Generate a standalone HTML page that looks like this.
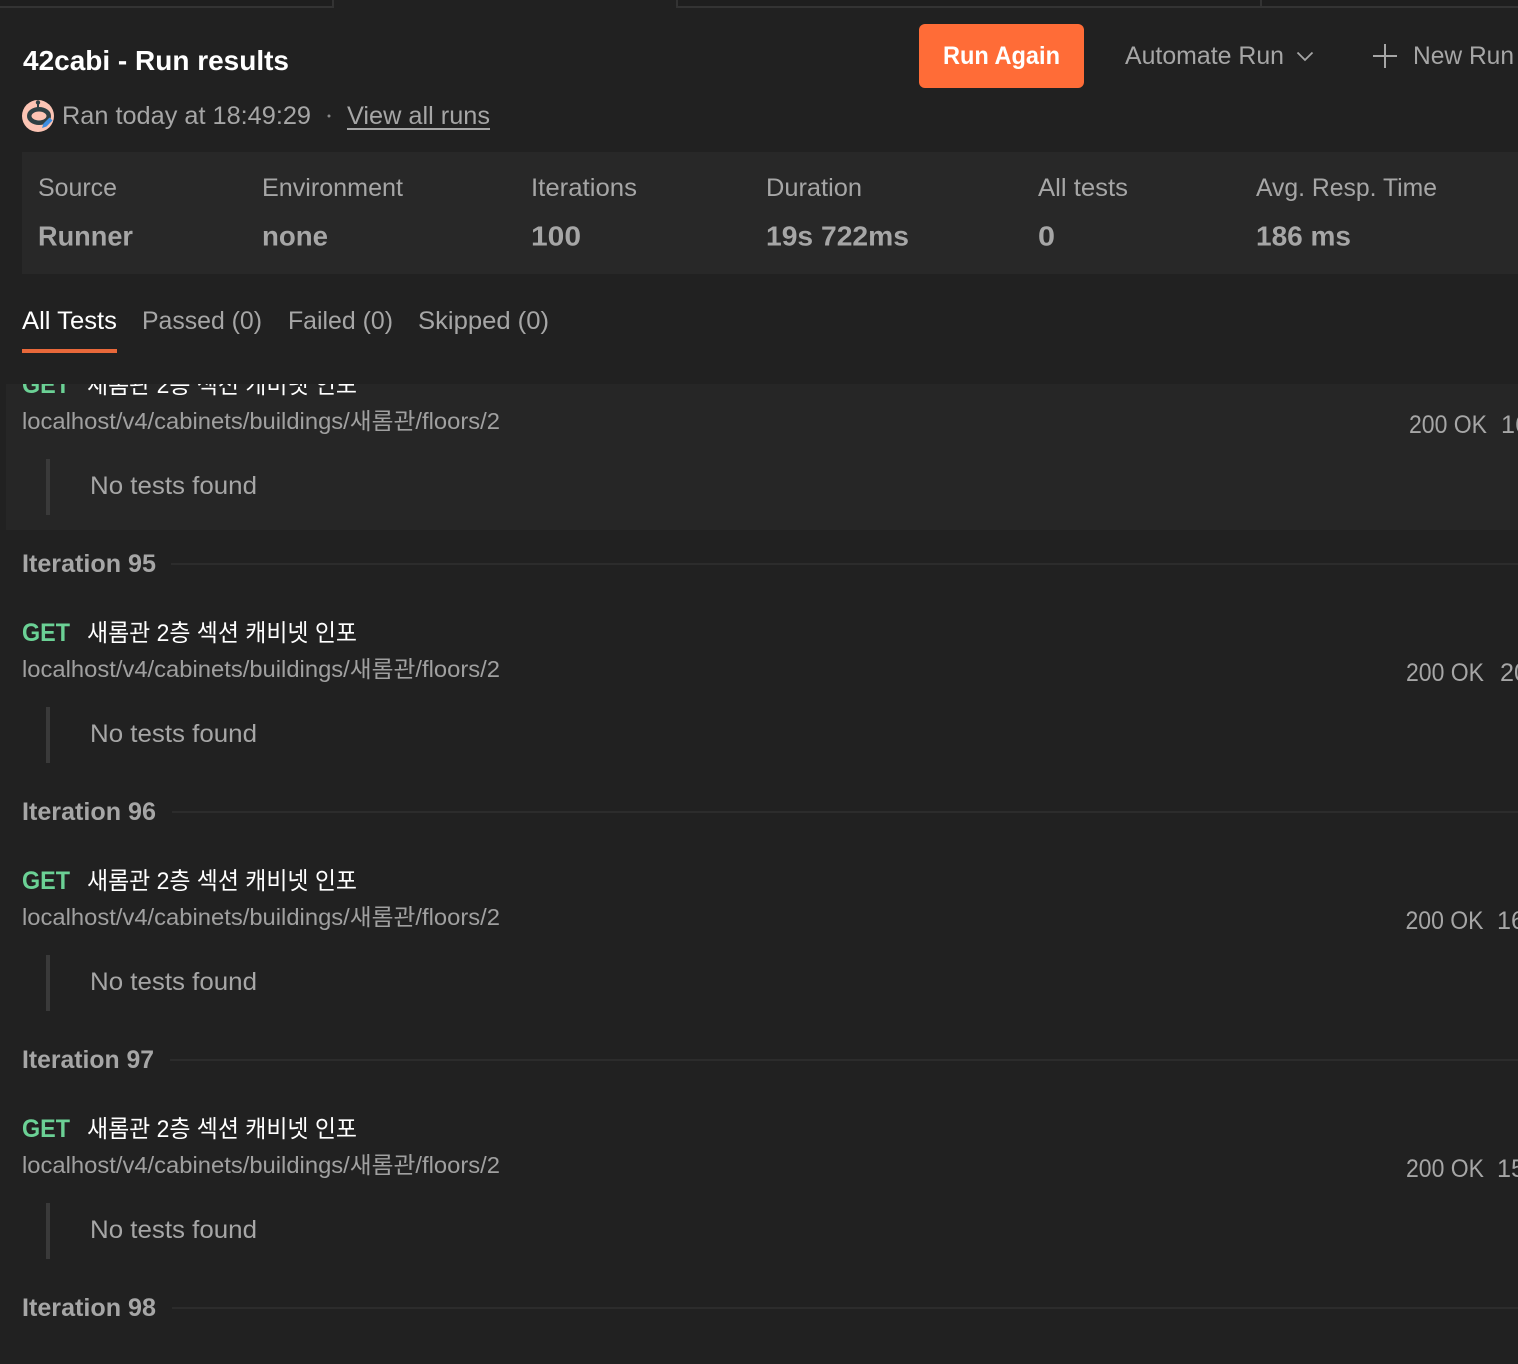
<!DOCTYPE html>
<html lang="ko"><head><meta charset="utf-8"><title>42cabi - Run results</title>
<style>
html,body{margin:0;padding:0;background:#212121;width:1518px;height:1364px;overflow:hidden}
svg{display:block}
text{font-family:"Liberation Sans","Noto Sans CJK KR",sans-serif;font-size:25px;fill:#a6a6a6;white-space:pre}
.b{font-weight:700}
.v{font-weight:700;font-size:28px;fill:#a6a6a6}
.w{fill:#fff}
.g{fill:#6bd195;font-weight:700;font-size:25px}
.it{font-weight:700;fill:#a6a6a6;font-size:25px}
.u{font-size:23px;fill:#a0a0a0}
.k{font-size:24px;fill:#fff}
</style></head><body>
<svg width="1518" height="1364" viewBox="0 0 1518 1364" xmlns="http://www.w3.org/2000/svg">
<defs>
<g id="row">
<text class="g" x="22" y="641" textLength="48" lengthAdjust="spacingAndGlyphs">GET</text>
<text class="k" x="87" y="641" textLength="270" lengthAdjust="spacingAndGlyphs">새롬관 2층 섹션 캐비넷 인포</text>
<text class="u" x="22" y="677" textLength="478" lengthAdjust="spacingAndGlyphs">localhost/v4/cabinets/buildings/새롬관/floors/2</text>
<rect x="46" y="707" width="4" height="56" fill="#3a3a3a"/>
<text x="90" y="742" textLength="167" lengthAdjust="spacingAndGlyphs">No tests found</text>
</g>
<clipPath id="cl"><rect x="0" y="384" width="1518" height="160"/></clipPath>
</defs>
<rect width="1518" height="1364" fill="#212121"/>

<!-- top tab strip -->
<rect x="0" y="0" width="333" height="6" fill="#1e1e1e"/>
<rect x="677" y="0" width="841" height="6" fill="#1e1e1e"/>
<rect x="0" y="6" width="334" height="2" fill="#333"/>
<rect x="332" y="0" width="2" height="8" fill="#333"/>
<rect x="677" y="6" width="841" height="2" fill="#333"/>
<rect x="676" y="0" width="2" height="8" fill="#333"/>
<rect x="1260" y="0" width="2" height="8" fill="#333"/>

<!-- header -->
<text class="b w" x="23" y="70" style="font-size:28px" textLength="266" lengthAdjust="spacingAndGlyphs">42cabi - Run results</text>
<rect x="919" y="24" width="165" height="64" rx="6" fill="#ff6c37"/>
<text class="b w" x="943" y="64" textLength="117" lengthAdjust="spacingAndGlyphs">Run Again</text>
<text x="1125" y="64" textLength="159" lengthAdjust="spacingAndGlyphs">Automate Run</text>
<path d="M1297.5 52.500L1305 60L1312.500 52.500" fill="none" stroke="#a6a6a6" stroke-width="1.800"/>
<path d="M1385 44V68M1373 56H1397" fill="none" stroke="#a6a6a6" stroke-width="2"/>
<text x="1413" y="64" textLength="101" lengthAdjust="spacingAndGlyphs">New Run</text>

<!-- avatar -->
<circle cx="38" cy="116" r="16" fill="#fcc4b4"/>
<circle cx="38" cy="102.500" r="2.200" fill="#2f3f42"/>
<rect x="37" y="103" width="2" height="5" fill="#2f3f42"/>
<ellipse cx="39" cy="116" rx="9.750" ry="6.750" fill="none" stroke="#2f3f42" stroke-width="4.500"/>
<path d="M42 128L43.500 123.500L49.500 117.500L52.500 120.500L46.500 126.500Z" fill="#3f8ee0"/>

<text x="62" y="124" textLength="249" lengthAdjust="spacingAndGlyphs">Ran today at 18:49:29</text>
<circle cx="329" cy="116" r="1.500" fill="#8a8a8a"/>
<text x="347" y="124" textLength="143" lengthAdjust="spacingAndGlyphs">View all runs</text>
<rect x="347" y="128" width="143" height="2" fill="#a6a6a6"/>

<!-- stats -->
<rect x="22" y="152" width="1496" height="122" fill="#282828"/>
<text x="38" y="196" textLength="79" lengthAdjust="spacingAndGlyphs">Source</text>
<text x="262" y="196" textLength="141" lengthAdjust="spacingAndGlyphs">Environment</text>
<text x="531" y="196" textLength="106" lengthAdjust="spacingAndGlyphs">Iterations</text>
<text x="766" y="196" textLength="96" lengthAdjust="spacingAndGlyphs">Duration</text>
<text x="1038" y="196" textLength="90" lengthAdjust="spacingAndGlyphs">All tests</text>
<text x="1256" y="196" textLength="181" lengthAdjust="spacingAndGlyphs">Avg. Resp. Time</text>
<text class="v" x="38" y="245.500" textLength="95" lengthAdjust="spacingAndGlyphs">Runner</text>
<text class="v" x="262" y="245.500" textLength="66" lengthAdjust="spacingAndGlyphs">none</text>
<text class="v" x="531" y="245.500" textLength="50" lengthAdjust="spacingAndGlyphs">100</text>
<text class="v" x="766" y="245.500" textLength="143" lengthAdjust="spacingAndGlyphs">19s 722ms</text>
<text class="v" x="1038" y="245.500" textLength="17" lengthAdjust="spacingAndGlyphs">0</text>
<text class="v" x="1256" y="245.500" textLength="95" lengthAdjust="spacingAndGlyphs">186 ms</text>

<!-- tabs -->
<text class="w" x="22" y="329" textLength="95" lengthAdjust="spacingAndGlyphs">All Tests</text>
<text x="142" y="329" textLength="120" lengthAdjust="spacingAndGlyphs">Passed (0)</text>
<text x="288" y="329" textLength="105" lengthAdjust="spacingAndGlyphs">Failed (0)</text>
<text x="418" y="329" textLength="131" lengthAdjust="spacingAndGlyphs">Skipped (0)</text>
<rect x="22" y="349" width="95" height="4" fill="#e8683a"/>

<!-- clipped first row -->
<rect x="6" y="384" width="1512" height="146" fill="#262626"/>
<g clip-path="url(#cl)"><use href="#row" y="-248"/></g>
<text x="1409" y="433" textLength="78" lengthAdjust="spacingAndGlyphs">200 OK</text>
<text x="1501" y="433" textLength="28" lengthAdjust="spacingAndGlyphs">16</text>

<!-- iterations -->
<text class="it" x="22" y="572" textLength="134" lengthAdjust="spacingAndGlyphs">Iteration 95</text>
<rect x="171" y="563.500" width="1347" height="1" fill="#363636"/>
<use href="#row"/>
<text x="1406" y="681" textLength="78" lengthAdjust="spacingAndGlyphs">200 OK</text>
<text x="1500" y="681" textLength="28" lengthAdjust="spacingAndGlyphs">20</text>

<text class="it" x="22" y="820" textLength="134" lengthAdjust="spacingAndGlyphs">Iteration 96</text>
<rect x="172" y="811.500" width="1346" height="1" fill="#363636"/>
<use href="#row" y="248"/>
<text x="1405.500" y="929" textLength="78" lengthAdjust="spacingAndGlyphs">200 OK</text>
<text x="1497" y="929" textLength="28" lengthAdjust="spacingAndGlyphs">16</text>

<text class="it" x="22" y="1068" textLength="132" lengthAdjust="spacingAndGlyphs">Iteration 97</text>
<rect x="170" y="1059.500" width="1348" height="1" fill="#363636"/>
<use href="#row" y="496"/>
<text x="1406" y="1177" textLength="78" lengthAdjust="spacingAndGlyphs">200 OK</text>
<text x="1497" y="1177" textLength="28" lengthAdjust="spacingAndGlyphs">15</text>

<text class="it" x="22" y="1316" textLength="134" lengthAdjust="spacingAndGlyphs">Iteration 98</text>
<rect x="172" y="1307.500" width="1346" height="1" fill="#363636"/>
</svg>
</body></html>
